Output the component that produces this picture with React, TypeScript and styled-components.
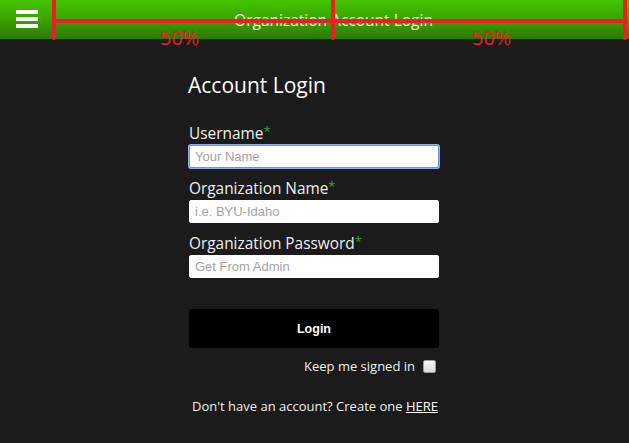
import React from 'react';
import styled, { createGlobalStyle } from 'styled-components';

const GlobalStyle = createGlobalStyle`
  html, body {
    margin: 0;
    padding: 0;
    background: #1b1b1b;
    height: 100%;
  }
  body {
    font-family: 'Open Sans', 'Liberation Sans', sans-serif;
    color: #eeeeee;
  }
`;

const Page = styled.div`
  position: relative;
  min-height: 443px;
  background: #1b1b1b;
`;

const TopBar = styled.header`
  position: relative;
  height: 39px;
  display: flex;
  align-items: center;
  justify-content: center;
  background: linear-gradient(to bottom, #45c400 0%, #3aa300 50%, #2d7a00 100%);
`;

const MenuButton = styled.button`
  position: absolute;
  left: 16px;
  top: 10px;
  width: 22px;
  height: 18px;
  padding: 0;
  border: none;
  background: transparent;
  display: flex;
  flex-direction: column;
  justify-content: space-between;
  cursor: pointer;
`;

const MenuBar = styled.span`
  display: block;
  height: 4px;
  background: #ffffff;
`;

const Title = styled.h1`
  margin: 0;
  font-size: 15.5px;
  font-weight: 400;
  color: #e8f5e0;
  padding-left: 38px;
`;

// red measurement marks drawn over the header
const Mark = styled.div<{ $left: number }>`
  position: absolute;
  top: 0;
  left: ${(p) => p.$left}px;
  width: 4px;
  height: 40px;
  background: #ee1c24;
  border-radius: 0 0 2px 2px;
`;

const MarkLine = styled.div`
  position: absolute;
  top: 19px;
  left: 52px;
  right: 2px;
  height: 4px;
  background: #ee1c24;
`;

const MarkLabel = styled.span<{ $left: number }>`
  position: absolute;
  top: 26px;
  left: ${(p) => p.$left}px;
  font-size: 20px;
  color: #ee1c24;
  line-height: 24px;
`;

const Form = styled.form`
  width: 250px;
  margin-left: calc(50% - 125.5px);
  padding-top: 30px;
  display: flex;
  flex-direction: column;
`;

const Heading = styled.h2`
  margin: 0 0 22px -1px;
  font-size: 21px;
  font-weight: 400;
  line-height: 32px;
  color: #ffffff;
`;

const Field = styled.div`
  display: flex;
  flex-direction: column;
  margin-bottom: 10px;
`;

const Label = styled.label`
  font-size: 15.4px;
  line-height: 22px;
  color: #eeeeee;
`;

const Star = styled.span`
  color: #21b11b;
  font-size: 13px;
  vertical-align: top;
  position: relative;
  top: -3px;
`;

const Input = styled.input`
  box-sizing: border-box;
  width: 250px;
  height: 23px;
  border: 1px solid #ffffff;
  border-radius: 2px;
  padding: 0 5px;
  font-family: 'Liberation Sans', Arial, sans-serif;
  font-size: 13px;
  color: #333;
  background: #ffffff;
  outline: none;
  &::placeholder {
    color: #a3a3a3;
  }
  &:focus {
    border-color: #6b93e0;
    box-shadow: 0 0 0 1px #8fb0ee;
  }
`;

const LoginButton = styled.button`
  margin-top: 21px;
  height: 39px;
  width: 250px;
  border: none;
  border-radius: 3px;
  background: #000000;
  color: #ffffff;
  font-family: 'Liberation Sans', Arial, sans-serif;
  font-weight: 700;
  font-size: 12.5px;
  cursor: pointer;
`;

const Remember = styled.label`
  margin-top: 10px;
  display: flex;
  justify-content: flex-end;
  align-items: center;
  gap: 8px;
  font-size: 13px;
  line-height: 16px;
  color: #eeeeee;
  padding-right: 3px;
`;

const Check = styled.span`
  width: 11px;
  height: 11px;
  border: 1px solid #9a9a9a;
  border-radius: 2px;
  background: linear-gradient(#f4f4f4, #dcdcdc);
`;

const SignUp = styled.p`
  margin: 23px 0 0;
  text-align: center;
  font-size: 13px;
  line-height: 18px;
  color: #eeeeee;
  padding-left: 2px;
`;

const Link = styled.a`
  color: #ffffff;
  text-decoration: underline;
`;

export default function App() {
  return (
    <Page>
      <GlobalStyle />
      <TopBar>
        <MenuButton type="button" aria-label="Menu">
          <MenuBar />
          <MenuBar />
          <MenuBar />
        </MenuButton>
        <Title>Organization Account Login</Title>
        <MarkLine />
        <Mark $left={52} />
        <Mark $left={331} />
        <Mark $left={623} />
        <MarkLabel $left={160}>50%</MarkLabel>
        <MarkLabel $left={472}>50%</MarkLabel>
      </TopBar>
      <Form onSubmit={(e) => e.preventDefault()}>
        <Heading>Account Login</Heading>
        <Field>
          <Label>
            Username<Star>*</Star>
          </Label>
          <Input placeholder="Your Name" autoFocus />
        </Field>
        <Field>
          <Label>
            Organization Name<Star>*</Star>
          </Label>
          <Input placeholder="i.e. BYU-Idaho" />
        </Field>
        <Field>
          <Label>
            Organization Password<Star>*</Star>
          </Label>
          <Input type="text" placeholder="Get From Admin" />
        </Field>
        <LoginButton type="submit">Login</LoginButton>
        <Remember>
          Keep me signed in
          <Check />
        </Remember>
        <SignUp>
          Don't have an account? Create one <Link href="#">HERE</Link>
        </SignUp>
      </Form>
    </Page>
  );
}
